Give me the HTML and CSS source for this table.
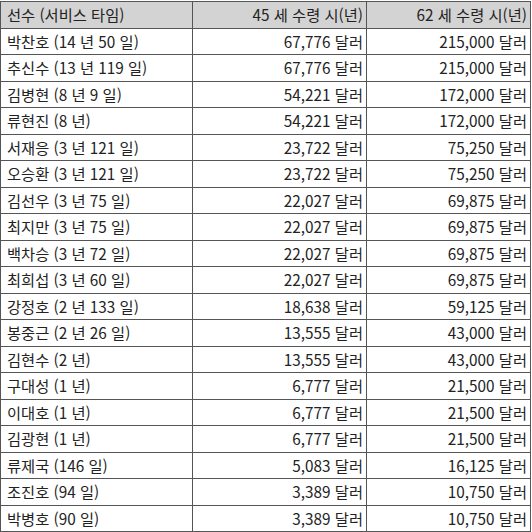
FILE: index.html
```html
<!DOCTYPE html>
<html lang="ko">
<head>
<meta charset="utf-8">
<link rel="stylesheet" href="styles.css">
</head>
<body>
<table class="salary">
<thead>
<tr><th class="c1">선수 (서비스 타임)</th><th class="c2">45 세 수령 시(년)</th><th class="c3">62 세 수령 시(년)</th></tr>
</thead>
<tbody>
<tr><td>박찬호 (14 년 50 일)</td><td>67,776 달러</td><td>215,000 달러</td></tr>
<tr><td>추신수 (13 년 119 일)</td><td>67,776 달러</td><td>215,000 달러</td></tr>
<tr><td>김병현 (8 년 9 일)</td><td>54,221 달러</td><td>172,000 달러</td></tr>
<tr><td>류현진 (8 년)</td><td>54,221 달러</td><td>172,000 달러</td></tr>
<tr><td>서재응 (3 년 121 일)</td><td>23,722 달러</td><td>75,250 달러</td></tr>
<tr><td>오승환 (3 년 121 일)</td><td>23,722 달러</td><td>75,250 달러</td></tr>
<tr><td>김선우 (3 년 75 일)</td><td>22,027 달러</td><td>69,875 달러</td></tr>
<tr><td>최지만 (3 년 75 일)</td><td>22,027 달러</td><td>69,875 달러</td></tr>
<tr><td>백차승 (3 년 72 일)</td><td>22,027 달러</td><td>69,875 달러</td></tr>
<tr><td>최희섭 (3 년 60 일)</td><td>22,027 달러</td><td>69,875 달러</td></tr>
<tr><td>강정호 (2 년 133 일)</td><td>18,638 달러</td><td>59,125 달러</td></tr>
<tr><td>봉중근 (2 년 26 일)</td><td>13,555 달러</td><td>43,000 달러</td></tr>
<tr><td>김현수 (2 년)</td><td>13,555 달러</td><td>43,000 달러</td></tr>
<tr><td>구대성 (1 년)</td><td>6,777 달러</td><td>21,500 달러</td></tr>
<tr><td>이대호 (1 년)</td><td>6,777 달러</td><td>21,500 달러</td></tr>
<tr><td>김광현 (1 년)</td><td>6,777 달러</td><td>21,500 달러</td></tr>
<tr><td>류제국 (146 일)</td><td>5,083 달러</td><td>16,125 달러</td></tr>
<tr><td>조진호 (94 일)</td><td>3,389 달러</td><td>10,750 달러</td></tr>
<tr><td>박병호 (90 일)</td><td>3,389 달러</td><td>10,750 달러</td></tr>
</tbody>
</table>
</body>
</html>
```
FILE: styles.css
```css
html, body {
  margin: 0;
  padding: 0;
  background: #ffffff;
}
.salary {
  border-collapse: collapse;
  width: 531px;
  table-layout: fixed;
  margin-top: 1px;
  font-family: "Noto Sans CJK KR", "Noto Sans", sans-serif;
  font-size: 15.3px;
  color: #222222;
}
.salary th, .salary td {
  box-sizing: border-box;
  border: 1px solid #555555;
  height: 26.5px;
  padding: 0 3px 0 6px;
  line-height: 25px;
  font-weight: normal;
  white-space: nowrap;
  overflow: hidden;
}
.salary th {
  background: #d3d3d3;
  text-align: left;
}
.salary th.c2, .salary th.c3 {
  text-align: right;
}
.salary .c1 { width: 192px; }
.salary .c2 { width: 174px; }
.salary td + td {
  text-align: right;
}
```
